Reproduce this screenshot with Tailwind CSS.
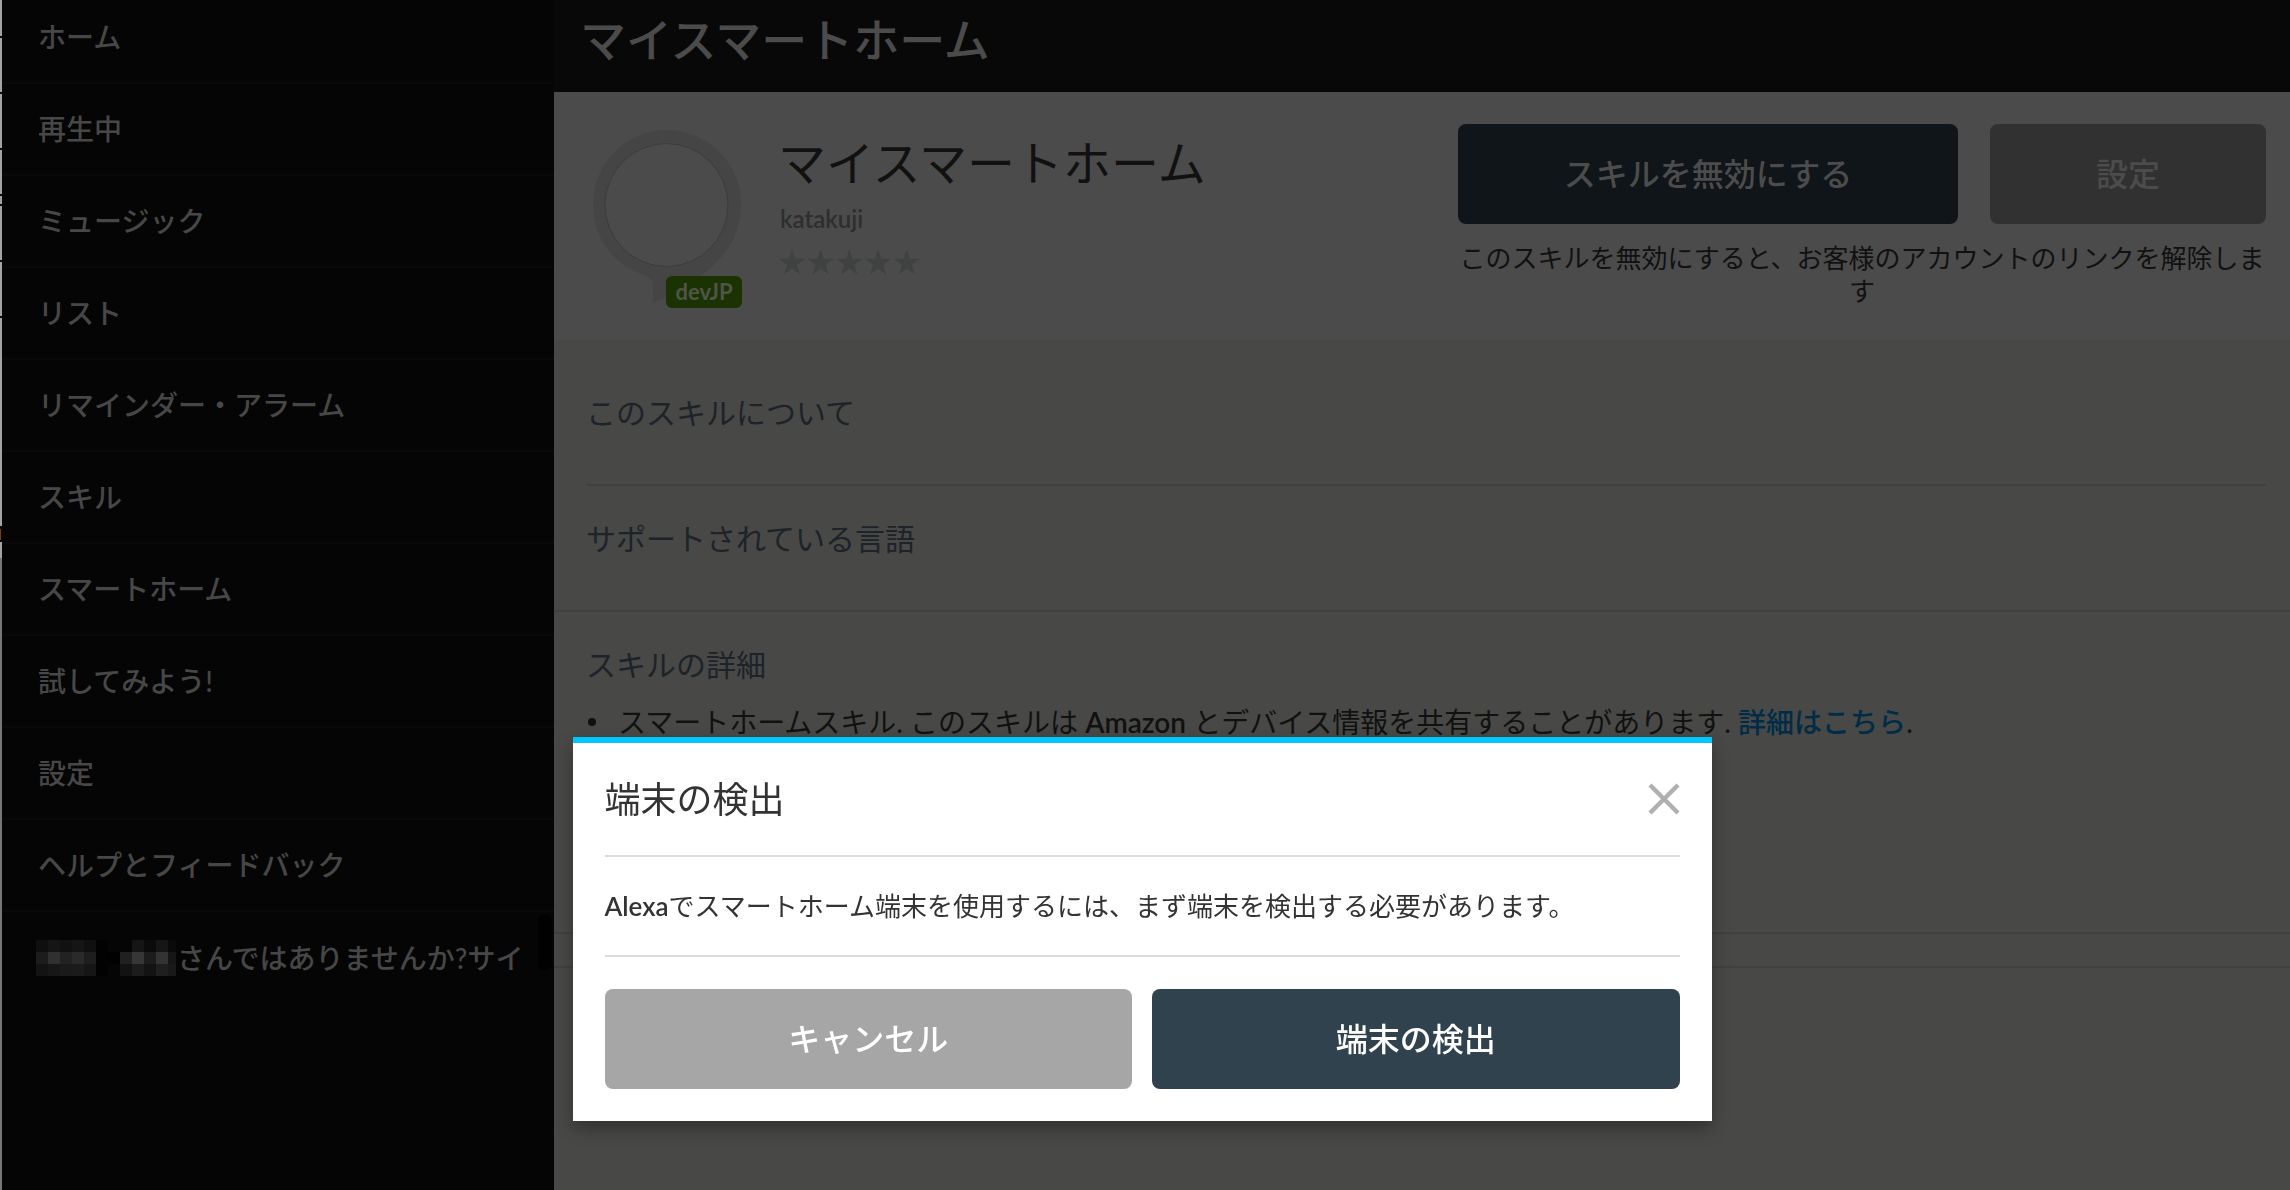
<!DOCTYPE html>
<html lang="ja">
<head>
    <meta charset="UTF-8">
    <meta name="viewport" content="width=device-width, initial-scale=1.0">
    <title>マイスマートホーム</title>
    <script src="https://cdn.jsdelivr.net/npm/@tailwindcss/browser@4"></script>
</head>
<body class="bg-[#484846] font-['Lato','Noto_Sans_CJK_JP',sans-serif] text-[#111111]">

    <div class="flex min-h-screen">
        <!-- Window edge -->
        <svg class="w-[2px] h-[1190px] shrink-0" viewBox="0 0 2 1190" preserveAspectRatio="none" shape-rendering="crispEdges">
            <rect width="2" height="1190" fill="#a3a3a3"/>
            <path d="M0 36h2v2H0zM0 92h2v2H0zM0 148h2v2H0zM0 194h2v2H0zM0 204h2v2H0zM0 260h2v2H0zM0 316h2v2H0zM0 526h2v16H0z" fill="#0a0a0a"/>
            <rect y="529" width="1" height="11" fill="#7a3e00"/>
            <rect y="558" width="2" height="632" fill="#777777"/>
        </svg>

        <!-- Sidebar -->
        <nav class="w-[552px] shrink-0 overflow-hidden relative bg-[#050505] text-[#474747] text-[28px] leading-[40px] font-medium">
            <ul class="-mt-2">
                <li class="h-[92px] border-b-2 border-[#090909]"><a href="#" class="flex h-full items-center pl-9">ホーム</a></li>
                <li class="h-[92px] border-b-2 border-[#090909]"><a href="#" class="flex h-full items-center pl-9">再生中</a></li>
                <li class="h-[92px] border-b-2 border-[#090909]"><a href="#" class="flex h-full items-center pl-9">ミュージック</a></li>
                <li class="h-[92px] border-b-2 border-[#090909]"><a href="#" class="flex h-full items-center pl-9">リスト</a></li>
                <li class="h-[92px] border-b-2 border-[#090909]"><a href="#" class="flex h-full items-center pl-9">リマインダー・アラーム</a></li>
                <li class="h-[92px] border-b-2 border-[#090909]"><a href="#" class="flex h-full items-center pl-9">スキル</a></li>
                <li class="h-[92px] border-b-2 border-[#090909]"><a href="#" class="flex h-full items-center pl-9">スマートホーム</a></li>
                <li class="h-[92px] border-b-2 border-[#090909]"><a href="#" class="flex h-full items-center pl-9">試してみよう!</a></li>
                <li class="h-[92px] border-b-2 border-[#090909]"><a href="#" class="flex h-full items-center pl-9">設定</a></li>
                <li class="h-[92px] border-b-2 border-[#090909]"><a href="#" class="flex h-full items-center pl-9">ヘルプとフィードバック</a></li>
                <li class="h-[92px]">
                    <a href="#" class="flex h-full items-center pl-[34px] whitespace-nowrap">
                        <!-- Masked name -->
                        <svg class="w-[141px] h-9 shrink-0" viewBox="0 0 141 36" shape-rendering="crispEdges">
                            <path d="M0 0h12v12H0z" fill="#0f0f0f"/><path d="M12 0h12v12H12z" fill="#151515"/><path d="M24 0h12v12H24z" fill="#111111"/><path d="M36 0h12v12H36z" fill="#151515"/><path d="M48 0h12v12H48z" fill="#101010"/>
                            <path d="M0 12h12v12H0z" fill="#1c1c1c"/><path d="M12 12h12v12H12z" fill="#303030"/><path d="M24 12h12v12H24z" fill="#222222"/><path d="M36 12h12v12H36z" fill="#2a2a2a"/><path d="M48 12h12v12H48z" fill="#1e1e1e"/>
                            <path d="M0 24h12v12H0z" fill="#131313"/><path d="M12 24h12v12H12z" fill="#171717"/><path d="M24 24h12v12H24z" fill="#1a1a1a"/><path d="M36 24h12v12H36z" fill="#1b1b1b"/><path d="M48 24h12v12H48z" fill="#161616"/>
                            <path d="M60 0h12v36H60z" fill="#020202"/><path d="M72 12h12v12H72z" fill="#010101"/>
                            <path d="M96 0h12v12H96z" fill="#151515"/><path d="M108 0h12v12H108z" fill="#0b0b0b"/><path d="M120 0h12v12H120z" fill="#161616"/><path d="M132 0h8v12H132z" fill="#0a0a0a"/>
                            <path d="M84 12h12v12H84z" fill="#202020"/><path d="M96 12h12v12H96z" fill="#363636"/><path d="M108 12h12v12H108z" fill="#1c1c1c"/><path d="M120 12h12v12H120z" fill="#333333"/><path d="M132 12h8v12H132z" fill="#161616"/>
                            <path d="M84 24h12v12H84z" fill="#121212"/><path d="M96 24h12v12H96z" fill="#1c1c1c"/><path d="M108 24h12v12H108z" fill="#131313"/><path d="M120 24h12v12H120z" fill="#1f1f1f"/><path d="M132 24h8v12H132z" fill="#191919"/>
                        </svg>
                        <span>さんではありませんか?サイ</span>
                    </a>
                </li>
            </ul>
            <div class="absolute right-[2px] top-[914px] w-[14px] h-[56px] rounded-full bg-[#010101]"></div>
        </nav>

        <!-- Page -->
        <main class="flex-1 min-w-0">
            <header class="h-[92px] bg-[#080808] pl-[26px] pt-2 text-[#4b4b4b]">
                <h1 class="text-[46px] leading-[64px] font-medium">マイスマートホーム</h1>
            </header>

            <!-- Skill summary -->
            <section class="flex h-[248px] bg-[#4b4b4b] pl-[39px] pr-6">
                <div class="relative w-[149px] mt-[38px] shrink-0">
                    <svg class="w-[148px] h-[172px]" viewBox="0 0 148 172">
                        <path d="M74 0a74 74 0 0 1 74 74c0 30-14 52-38 70C95 156 82 167 60 172V154Q60 149 54 146C22 136 0 110 0 74A74 74 0 0 1 74 0z" fill="#454545"/>
                        <circle cx="73.500" cy="75" r="61.500" fill="#4b4b4b" stroke="#3c3c3c" stroke-width="1"/>
                    </svg>
                    <span class="absolute left-[73px] top-[146px] w-[76px] h-[32px] rounded-md bg-[#1b3302] text-[#4f5547] text-[22px] leading-[32px] font-bold text-center">devJP</span>
                </div>
                <div class="pl-[36px] pt-[38px]">
                    <h2 class="text-[48px] leading-[66px]">マイスマートホーム</h2>
                    <p class="text-[24px] leading-[32px] mt-[7px] pl-[2px] font-semibold text-[#2e2e2e]">katakuji</p>
                    <svg class="w-[141px] h-[26px] mt-[14px] ml-px" viewBox="0 0 141 26" fill="#3f4241">
                        <defs>
                            <path id="star" d="M13 0l3 9.700h10l-8 6 3 9.700-8-6-8 6 3-9.700-8-6h10z"/>
                        </defs>
                        <use href="#star"/>
                        <use href="#star" x="28.700"/>
                        <use href="#star" x="57.400"/>
                        <use href="#star" x="86.100"/>
                        <use href="#star" x="114.800"/>
                    </svg>
                </div>
                <div class="ml-auto w-[808px] shrink-0 pt-8">
                    <div class="flex gap-8 text-[32px] text-[#4c4c4c] font-medium">
                        <button class="w-[500px] h-[100px] rounded-lg bg-[#0f1518]">スキルを無効にする</button>
                        <button class="flex-1 h-[100px] rounded-lg bg-[#313131]">設定</button>
                    </div>
                    <p class="mt-[18px] text-[26px] leading-[33px] text-center">このスキルを無効にすると、お客様のアカウントのリンクを解除します</p>
                </div>
            </section>

            <!-- Details -->
            <section class="mx-8 mr-6 h-[146px] border-b-2 border-[#40403e] pt-[50px]">
                <h3 class="text-[30px] leading-[44px] text-[#1c2329]">このスキルについて</h3>
            </section>
            <section class="pl-8 h-[126px] border-b-2 border-[#40403e] pt-[30px]">
                <h3 class="text-[30px] leading-[44px] text-[#1c2329]">サポートされている言語</h3>
            </section>
            <section class="pl-8 h-[322px] border-b-2 border-[#40403e] pt-[30px]">
                <h3 class="text-[30px] leading-[44px] text-[#1c2329]">スキルの詳細</h3>
                <ul class="mt-4 text-[28px] leading-[40px]">
                    <li class="flex items-center">
                        <span class="w-2 h-2 ml-[2px] mr-[22px] rounded-full bg-[#111111]"></span>
                        <p>スマートホームスキル. このスキルは <span class="font-semibold">Amazon</span> とデバイス情報を共有することがあります. <a href="#" class="text-[#002c47] font-medium">詳細はこちら</a>.</p>
                    </li>
                </ul>
            </section>
            <div class="h-[34px] border-b-2 border-[#40403e]"></div>
        </main>
    </div>

    <!-- Discover devices dialog -->
    <div role="dialog" aria-labelledby="dialogTitle" class="fixed left-1/4 top-[737px] w-[1139px] bg-white border-t-6 border-[#00c8ff] px-8 pb-8 text-[#333333] shadow-[0_8px_16px_rgba(0,0,0,0.3)]">
        <div class="flex items-center justify-between h-[114px] border-b-2 border-[#dddddd]">
            <h2 id="dialogTitle" class="text-[36px] leading-[52px]">端末の検出</h2>
            <button aria-label="閉じる">
                <svg class="w-8 h-8" viewBox="0 0 32 32" fill="none" stroke="#b0b0b0" stroke-width="4.500">
                    <path d="M2 2l28 28M30 2L2 30"/>
                </svg>
            </button>
        </div>
        <p class="flex items-center h-[100px] border-b-2 border-[#dddddd] text-[26px]"><span><span class="font-semibold">Alexa</span>でスマートホーム端末を使用するには、まず端末を検出する必要があります。</span></p>
        <div class="grid grid-cols-2 gap-5 pt-8 text-[32px] text-white font-medium">
            <button class="h-[100px] rounded-lg bg-[#a6a6a6]">キャンセル</button>
            <button class="h-[100px] rounded-lg bg-[#2f424d]">端末の検出</button>
        </div>
    </div>

</body>
</html>
